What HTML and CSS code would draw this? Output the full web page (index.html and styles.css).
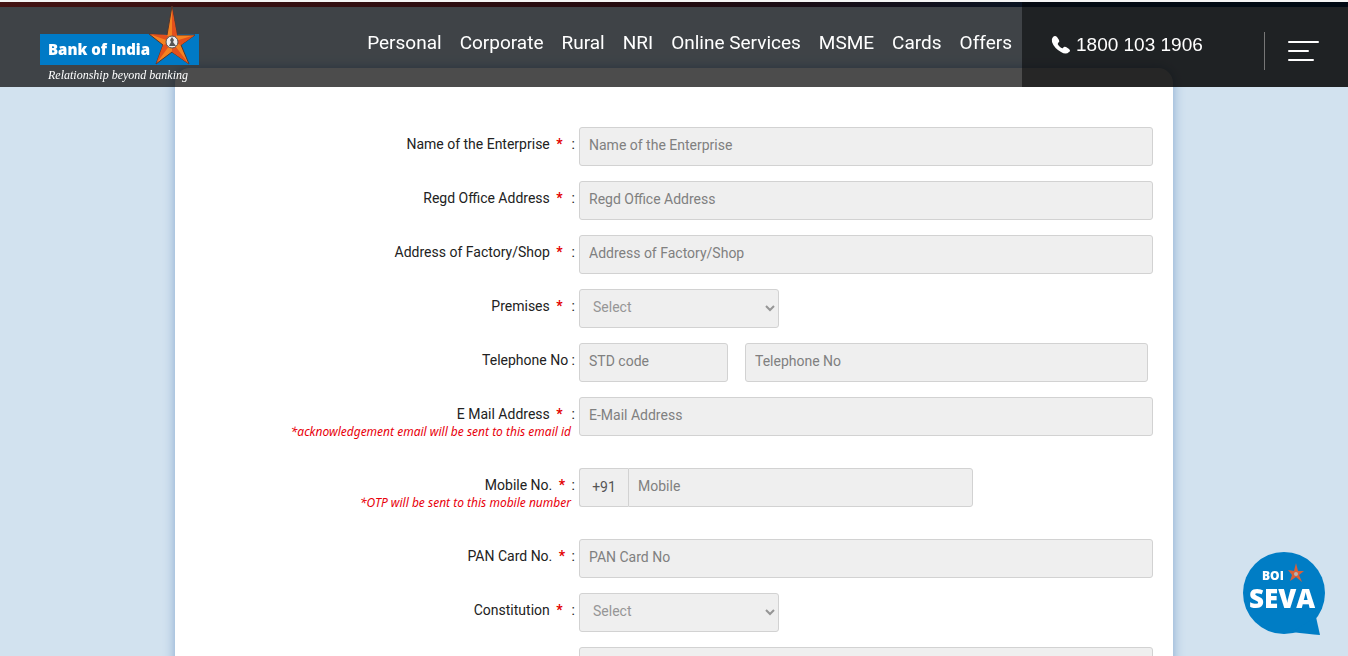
FILE: index.html
```html
<!DOCTYPE html>
<html lang="en">
<head>
    <meta charset="UTF-8">
    <meta name="viewport" content="width=device-width, initial-scale=1.0">
    <title>Bank of India</title>
    <link rel="stylesheet" href="styles.css">
</head>
<body>

    <header class="header">
        <a href="#" class="logo">
            <svg width="160" height="82" viewBox="0 0 160 82" role="img">
                <rect x="0" y="30" width="159" height="31" fill="#007ac6"/>
                <text x="8" y="51" class="logo-name">Bank of India</text>
                <text x="8" y="75" class="logo-tag">Relationship beyond banking</text>
                <path d="M132 2L137 31L155 31L141 41L149 60L132 48L116 60L123 41L109 30L127 31Z" fill="#f58220" stroke="#54342a" stroke-linejoin="round"/>
                <path d="M132 4V38L137 31ZM155 31L132 38L141 41ZM149 60L132 38V48ZM116 60L132 38L123 41ZM109 30L132 38L127 31Z" fill="#e2501c"/>
                <circle cx="132" cy="38" r="6" fill="#eee" stroke="#555"/>
                <path d="M132 33L130 36L131 38L129 42H136L133 38L134 36Z" fill="#555"/>
            </svg>
        </a>
        <nav class="nav">
            <a href="#">Personal</a>
            <a href="#">Corporate</a>
            <a href="#">Rural</a>
            <a href="#">NRI</a>
            <a href="#">Online Services</a>
            <a href="#">MSME</a>
            <a href="#">Cards</a>
            <a href="#">Offers</a>
        </nav>
        <div class="contact">
            <a href="#" class="phone">
                <svg width="20" height="20" viewBox="0 0 20 20">
                    <path d="M2 2Q4 0 6 2L8 5Q9 7 7 8Q6 9 8 11Q11 14 12 13Q13 11 15 12L18 14Q20 16 18 17Q15 20 10 17Q3 13 1 7Q0 4 2 2Z" fill="#fff"/>
                </svg>
                1800 103 1906
            </a>
            <button class="menu-btn" aria-label="Menu">
                <svg width="32" height="22" viewBox="0 0 32 22" stroke="#fff" stroke-width="2" stroke-linecap="round">
                    <path d="M2 2H31M2 11H21M2 20H26"/>
                </svg>
            </button>
        </div>
    </header>

    <div class="top-strip"></div>

    <main>
        <form class="card">
            <div class="row">
                <label for="name">Name of the Enterprise <b class="req">*</b><span class="colon">:</span></label>
                <input type="text" id="name" placeholder="Name of the Enterprise">
            </div>
            <div class="row">
                <label for="regd">Regd Office Address <b class="req">*</b><span class="colon">:</span></label>
                <input type="text" id="regd" placeholder="Regd Office Address">
            </div>
            <div class="row">
                <label for="factory">Address of Factory/Shop <b class="req">*</b><span class="colon">:</span></label>
                <input type="text" id="factory" placeholder="Address of Factory/Shop">
            </div>
            <div class="row">
                <label for="premises">Premises <b class="req">*</b><span class="colon">:</span></label>
                <select id="premises">
                    <option>Select</option>
                </select>
            </div>
            <div class="row">
                <label for="tel">Telephone No :</label>
                <div class="tel-group">
                    <input type="text" aria-label="STD code" placeholder="STD code">
                    <input type="text" id="tel" placeholder="Telephone No">
                </div>
            </div>
            <div class="row row-note">
                <label for="email">E Mail Address <b class="req">*</b><span class="colon">:</span>
                    <em class="note">*acknowledgement email will be sent to this email id</em>
                </label>
                <input type="text" id="email" placeholder="E-Mail Address">
            </div>
            <div class="row row-note">
                <label for="mobile">Mobile No. <b class="req">*</b> :
                    <em class="note">*OTP will be sent to this mobile number</em>
                </label>
                <div class="mobile-group">
                    <span class="addon">+91</span>
                    <input type="text" id="mobile" placeholder="Mobile">
                </div>
            </div>
            <div class="row">
                <label for="pan">PAN Card No. <b class="req">*</b> :</label>
                <input type="text" id="pan" placeholder="PAN Card No">
            </div>
            <div class="row">
                <label for="constitution">Constitution <b class="req">*</b><span class="colon">:</span></label>
                <select id="constitution">
                    <option>Select</option>
                </select>
            </div>
            <div class="row">
                <span></span>
                <input type="text">
            </div>
        </form>
    </main>

    <a href="#" class="seva">
        <svg width="84" height="86" viewBox="0 0 84 86" role="img">
            <circle cx="42" cy="42" r="41" fill="#007dc5"/>
            <path d="M74 66L78 84Q66 83 50 81Z" fill="#007dc5"/>
            <text x="20" y="29" class="seva-boi">BOI</text>
            <path d="M54 12L56 20L62 20L57 24L60 31L54 26L48 30L50 24L46 19L52 20Z" fill="#d8603a"/>
            <circle cx="54" cy="23" r="2" fill="#b9b3b3"/>
            <text x="7" y="57" class="seva-name">SEVA</text>
        </svg>
    </a>

</body>
</html>
```
FILE: styles.css
```css
* {
    box-sizing: border-box;
}

body {
    margin: 0;
    height: 100vh;
    overflow: hidden;
    background-color: #d2e2ef;
    border-top: 2px solid #f5f5f5;
    font-family: Roboto, sans-serif;
    font-size: 14px;
    color: #222;
}

a {
    color: #fff;
    text-decoration: none;
}

/* header */
.header {
    position: fixed;
    top: 2px;
    left: 0;
    right: 0;
    height: 85px;
    display: flex;
    background: rgba(0, 0, 0, 0.7);
    z-index: 10;
}

.logo {
    margin-left: 40px;
    padding-top: 2px;
}

.logo-name {
    font: 800 15px "Open Sans", sans-serif;
    fill: #fff;
}

.logo-tag {
    font: italic 12px "Liberation Serif", serif;
    fill: #fff;
}

.nav {
    flex: 1;
    display: flex;
    justify-content: flex-end;
    align-items: center;
    gap: 18px;
    padding: 0 10px 4px 0;
    font-size: 19px;
    white-space: nowrap;
}

.contact {
    width: 326px;
    display: flex;
    justify-content: space-between;
    align-items: center;
    padding: 0 29px;
    background: rgba(0, 0, 0, 0.5);
}

.phone {
    display: flex;
    align-items: center;
    gap: 5px;
    font: 19px "Liberation Sans", sans-serif;
}

.menu-btn {
    height: 38px;
    margin-top: 12px;
    padding: 0 0 0 22px;
    border: 0;
    border-left: 1px solid #777;
    background: none;
    cursor: pointer;
}

.menu-btn svg,
.logo svg,
.seva svg {
    display: block;
}

.top-strip {
    height: 5px;
    background: linear-gradient(to right, #e04040, #702030 50%, #1a4a80 80%, #004080);
}

/* form */
main {
    padding-top: 61px;
}

.card {
    max-width: 998px;
    margin: 0 auto;
    padding: 59px 20px 0 0;
    border-radius: 15px;
    background: #fff;
    box-shadow: 0 0 12px #86a9cf;
}

.row {
    display: grid;
    grid-template-columns: 400px 1fr;
    column-gap: 4px;
    align-items: start;
    min-height: 39px;
    margin-bottom: 15px;
}

.row-note {
    min-height: 56px;
}

label {
    padding-top: 8px;
    text-align: right;
    line-height: 18px;
}

.req {
    margin: 0 3px;
    color: #e30000;
}

.colon {
    margin-left: 6px;
}

.note {
    display: block;
    padding-right: 4px;
    color: #e8000b;
    font-family: "Noto Sans", sans-serif;
    font-size: 12px;
}

input,
select,
.addon {
    width: 100%;
    height: 39px;
    padding: 0 9px 3px;
    border: 1px solid #d2d2d2;
    border-radius: 3px;
    background-color: #efefef;
    color: #555;
    font: 14px Roboto, sans-serif;
}

input::placeholder {
    color: #808080;
}

select {
    width: 200px;
    color: #969696;
}

.tel-group {
    display: grid;
    grid-template-columns: 149px 1fr;
    gap: 17px;
    padding-right: 5px;
}

.mobile-group {
    display: flex;
    width: 394px;
}

.addon {
    width: 49px;
    padding: 0;
    border-right: 0;
    border-radius: 3px 0 0 3px;
    line-height: 36px;
    text-align: center;
}

.mobile-group input {
    flex: 1;
    border-radius: 0 3px 3px 0;
}

/* chat bubble */
.seva {
    position: fixed;
    right: 22px;
    bottom: 19px;
}

.seva-boi {
    font: 800 12px "Open Sans", sans-serif;
    fill: #fff;
}

.seva-name {
    font: 800 26px "Open Sans", sans-serif;
    fill: #fff;
}
```
